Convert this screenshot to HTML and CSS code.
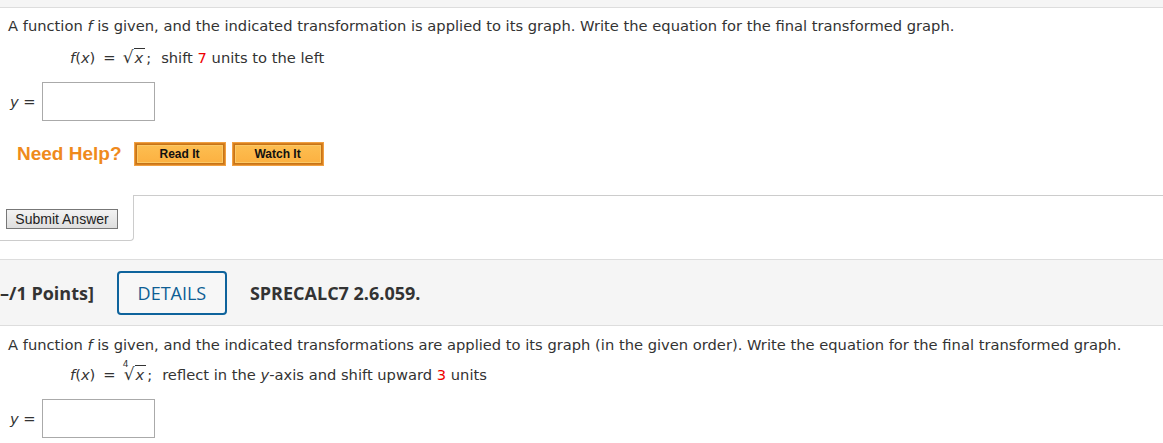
FILE: index.html
```html
<!DOCTYPE html>
<html>
<head>
<meta charset="utf-8">
<link rel="stylesheet" href="styles.css">
</head>
<body>
<div class="topband"></div>
<section class="question">
  <p class="prompt">A function <i>f</i> is given, and the indicated transformation is applied to its graph. Write the equation for the final transformed graph.</p>
  <p class="eq"><i>f</i>(<i>x</i>)<span class="eqs">=</span><span class="root"><span class="radical">√</span><span class="radicand"><i>x</i></span></span><span class="semi">;</span>shift <span class="red">7</span> units to the left</p>
  <div class="answer"><span class="lhs"><i>y</i> =</span><span class="box"></span></div>
  <div class="help">
    <span class="need">Need Help?</span>
    <span class="hbtn">Read It</span>
    <span class="hbtn">Watch It</span>
  </div>
  <div class="submit-row">
    <div class="submit-cell"><span class="submit">Submit Answer</span></div>
    <div class="submit-rest"></div>
  </div>
</section>
<div class="qheader">
  <span class="points">–/1 Points]</span>
  <span class="details">DETAILS</span>
  <span class="ref">SPRECALC7 2.6.059.</span>
</div>
<section class="question second">
  <p class="prompt">A function <i>f</i> is given, and the indicated transformations are applied to its graph (in the given order). Write the equation for the final transformed graph.</p>
  <p class="eq"><i>f</i>(<i>x</i>)<span class="eqs">=</span><span class="root nth"><span class="index">4</span><span class="radical">√</span><span class="radicand"><i>x</i></span></span><span class="semi">;</span>reflect in the <i>y</i>-axis and shift upward <span class="red">3</span> units</p>
  <div class="answer"><span class="lhs"><i>y</i> =</span><span class="box"></span></div>
</section>
</body>
</html>
```
FILE: styles.css
```css
html, body {
  margin: 0;
  padding: 0;
  background: #fff;
}
body {
  font-family: "DejaVu Sans", Verdana, sans-serif;
  font-size: 14.7px;
  color: #333;
  overflow: hidden;
}
.topband {
  height: 7px;
  background: #f5f5f5;
  border-bottom: 1px solid #ddd;
}
.question {
  padding: 0 0 0 8px;
}
.prompt {
  margin: 8px 0 0 0;
  line-height: 19px;
}
.eq {
  margin: 12px 0 0 62px;
  line-height: 20px;
  height: 20px;
  white-space: nowrap;
}
.eqs {
  margin: 0 7px 0 8px;
}
.semi {
  margin: 0 10px 0 1px;
}
.root {
  display: inline-block;
  position: relative;
  white-space: nowrap;
}
.nth {
  padding-left: 1px;
}
.radical {
  font-size: 17px;
}
.radicand {
  border-top: 1px solid #333;
  padding: 0 2px 0 1px;
}
.index {
  position: absolute;
  left: 0;
  top: -4px;
  font-size: 9px;
  line-height: 9px;
}
.red { color: #e00; }
.answer {
  display: flex;
  align-items: center;
  gap: 6px;
  margin-top: 15px;
  padding-left: 2px;
}
.box {
  width: 111px;
  height: 37px;
  border: 1px solid #aaa;
  box-sizing: content-box;
}
.help {
  display: flex;
  align-items: center;
  margin-top: 22px;
  padding-left: 9px;
}
.need {
  font-family: "Liberation Sans", Arial, sans-serif;
  font-weight: bold;
  font-size: 19px;
  color: #ef8a1c;
  margin-right: 13px;
}
.hbtn {
  display: inline-block;
  width: 88px;
  height: 20px;
  line-height: 20px;
  text-align: center;
  font-family: "Liberation Sans", Arial, sans-serif;
  font-weight: bold;
  font-size: 12px;
  color: #111;
  background: linear-gradient(#fdbf52, #fcb040);
  border: 1px solid #d9801f;
  box-shadow: inset 0 0 0 1px #c57418, inset 0 0 0 2px #fcc866;
  margin: 0 8px 0 0;
  outline: 1px solid #f0a040;
}
.submit-row {
  display: flex;
  margin: 30px 0 0 -8px;
}
.submit-cell {
  width: 134px;
  height: 46px;
  border-right: 1px solid #ccc;
  border-bottom: 1px solid #ccc;
  border-bottom-right-radius: 4px;
  padding: 14px 0 0 6px;
  box-sizing: border-box;
}
.submit {
  display: inline-block;
  width: 110px;
  height: 18px;
  line-height: 18px;
  text-align: center;
  font-family: "Liberation Sans", Arial, sans-serif;
  font-size: 14px;
  color: #222;
  background: linear-gradient(#f3f3f3, #dedede);
  border: 1px solid #777;
}
.submit-rest {
  flex: 1;
  border-top: 1px solid #ccc;
}
.qheader {
  margin-top: 18px;
  height: 65px;
  background: #f5f5f5;
  border-top: 1px solid #ddd;
  border-bottom: 1px solid #ddd;
  display: flex;
  align-items: center;
  font-family: "Open Sans", sans-serif;
  font-size: 18px;
}
.points {
  font-weight: 700;
  color: #333;
  margin-left: 0;
}
.details {
  margin-left: 23px;
  width: 106px;
  height: 40px;
  border: 2px solid #0e639c;
  border-radius: 4px;
  color: #0e5e94;
  font-weight: 500;
  display: flex;
  align-items: center;
  justify-content: center;
  background: #f7f7f7;
}
.ref {
  margin-left: 23px;
  font-weight: 700;
  color: #333;
}
.second .prompt {
  margin-top: 9px;
}
.second .eq {
  margin-top: 10px;
}
.second .answer {
  margin-top: 15px;
}
```
